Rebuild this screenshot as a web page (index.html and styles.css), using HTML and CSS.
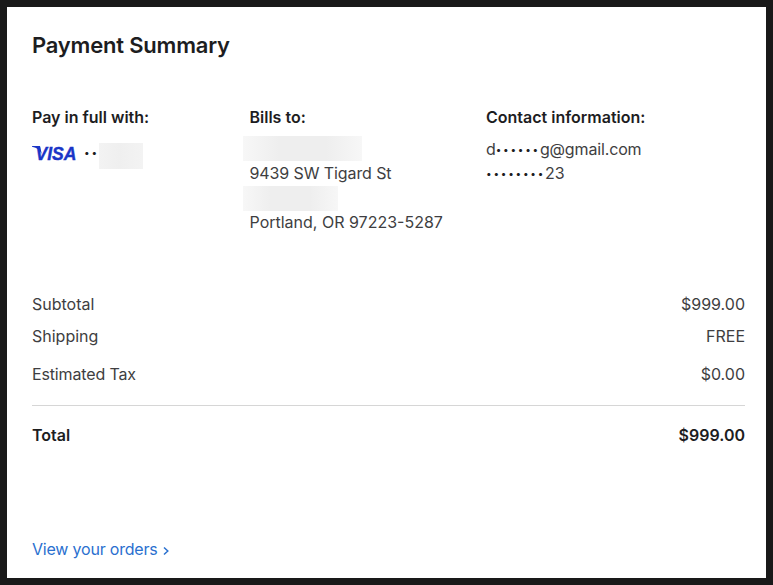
FILE: index.html
```html
<!DOCTYPE html>
<html lang="en">
<head>
<meta charset="utf-8">
<title>Payment Summary</title>
<link rel="stylesheet" href="styles.css">
</head>
<body>
<main class="panel">
  <h1>Payment Summary</h1>
  <section class="details">
    <div class="pay">
      <h2>Pay in full with:</h2>
      <div class="card">
        <svg class="visa" width="46" height="24" viewBox="0 0 46 24" role="img" aria-label="Visa">
          <path d="M0 3H8L10 12C8.5 7.5 5 4.6 0 3.8Z"/>
          <text x="3.5" y="16.5" textLength="41" lengthAdjust="spacingAndGlyphs">VISA</text>
        </svg>
        <span class="dots card-dots">••</span>
        <span class="redacted redacted-card"></span>
      </div>
    </div>
    <div class="bill">
      <h2>Bills to:</h2>
      <div class="redacted redacted-name"></div>
      <p class="street">9439 SW Tigard St</p>
      <div class="redacted redacted-unit"></div>
      <p class="city">Portland, OR 97223-5287</p>
    </div>
    <div class="contact">
      <h2>Contact information:</h2>
      <p class="email">d<span class="dots">••••••</span>g@gmail.com</p>
      <p class="phone"><span class="dots">••••••••</span>23</p>
    </div>
  </section>
  <dl class="totals">
    <div class="row subtotal"><dt>Subtotal</dt><dd>$999.00</dd></div>
    <div class="row shipping"><dt>Shipping</dt><dd>FREE</dd></div>
    <div class="row tax"><dt>Estimated Tax</dt><dd>$0.00</dd></div>
    <div class="row total"><dt>Total</dt><dd>$999.00</dd></div>
  </dl>
  <a class="orders" href="#">View your orders<svg width="6" height="10" viewBox="0 0 6 10" aria-hidden="true"><path d="M1 1.5L4.8 5L1 8.5"/></svg></a>
</main>
</body>
</html>
```
FILE: styles.css
```css
* { box-sizing: border-box; }
html, body { height: 100%; }
body {
  margin: 0;
  padding: 7px;
  background: #191919;
  color: #3e3e41;
  font: 400 16px/24px Inter, "Liberation Sans", sans-serif;
}
h1, h2, p, dl, dd { margin: 0; }
.panel {
  height: 571px;
  padding: 23px 21px 0 25px;
  background: #fff;
}
h1 {
  color: #1d1d1f;
  font-size: 22px;
  font-weight: 600;
  line-height: 30px;
  letter-spacing: -0.2px;
}
h2 {
  color: #1d1d1f;
  font-size: 16px;
  font-weight: 600;
  line-height: 24px;
}
p { line-height: 25px; white-space: nowrap; }
.details {
  display: grid;
  grid-template-columns: 217.5px 236.5px 1fr;
  height: 187px;
  margin-top: 45px;
}
.card { display: flex; align-items: center; height: 26px; margin-top: 13px; }
.visa { flex: none; fill: #1a35c7; overflow: visible; }
.visa text {
  font: italic 700 19px "Liberation Sans", sans-serif;
  stroke: #1a35c7;
  stroke-width: 0.4;
}
.dots { color: #1d1d1f; font-size: 10px; line-height: 1; letter-spacing: 1.75px; }
.email .dots, .phone .dots { position: relative; top: -2px; }
.card-dots { margin: -7px 0 0 6px; }
.redacted { background: linear-gradient(90deg, #f7f7f7, #eee 30%, #eee 70%, #f7f7f7); }
.redacted-card {
  width: 44px;
  height: 26px;
  margin: 1px 107px 0 auto;
  flex: none;
  background: linear-gradient(90deg, #f3f3f3, #efefef 45%, #f3f3f3);
}
.redacted-name { width: 119px; height: 25px; margin: 7px 0 0 -7px; }
.redacted-unit { width: 95px; height: 25px; margin-left: -7px; }
.street { letter-spacing: -0.1px; }
.city { line-height: 23px; }
.contact .email { margin-top: 8px; letter-spacing: -0.15px; }
.phone { line-height: 23px; }
.row { display: flex; justify-content: space-between; }
.shipping { margin-top: 8px; }
.tax { margin-top: 14px; }
.tax dt { letter-spacing: -0.15px; }
.total {
  margin-top: 19px;
  padding-top: 17px;
  border-top: 1px solid #d6d6d6;
  color: #1d1d1f;
  font-weight: 600;
}
.orders {
  display: inline-flex;
  align-items: center;
  margin-top: 90px;
  color: #2a70cf;
  letter-spacing: -0.2px;
  text-decoration: none;
}
.orders svg { margin: 3px 0 0 5.5px; fill: none; stroke: currentColor; stroke-width: 1.5; }
```
